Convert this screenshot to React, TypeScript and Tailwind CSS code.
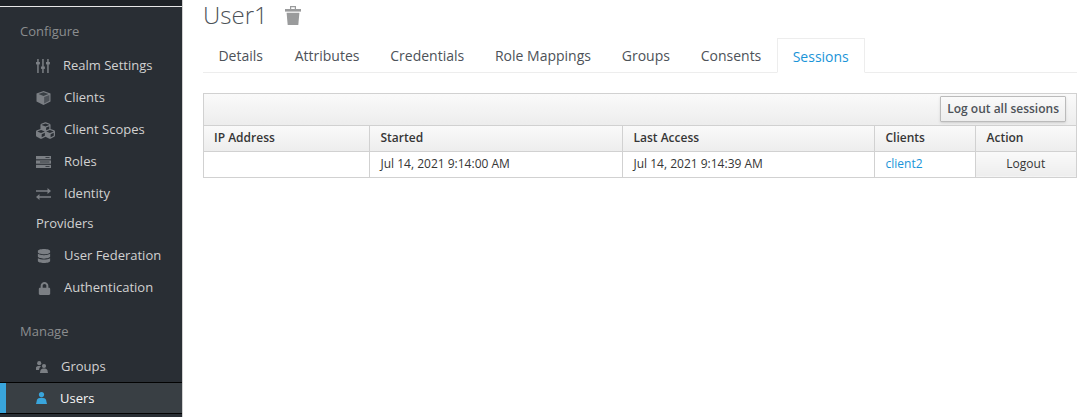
import type { ReactNode } from "react";
import { FaCubes, FaDatabase, FaLock } from "react-icons/fa";

function SlidersIcon() {
  return (
    <svg viewBox="0 0 14 14" className="h-[14px] w-[14px]" fill="currentColor">
      <rect x="1.2" y="0" width="1.5" height="14" />
      <rect x="6.2" y="0" width="1.5" height="14" />
      <rect x="11.2" y="0" width="1.5" height="14" />
      <rect x="0" y="3" width="3.9" height="2.4" />
      <rect x="5" y="7.5" width="3.9" height="2.4" />
      <rect x="10" y="3" width="3.9" height="2.4" />
    </svg>
  );
}

function CubeIcon() {
  return (
    <svg viewBox="0 0 15 15" className="h-[14px] w-[15px]">
      <path d="M7.5 0 15 2.8v8.4L7.5 15 0 11.2V2.8z" fill="#7b7f84" />
      <path d="M7.5 1.3 12.8 3.3 7.5 5.4 2.2 3.3z" fill="#393f44" />
      <path d="M8.2 6.5 13.8 4.2v6.3l-5.6 2.9z" fill="#4d5258" />
    </svg>
  );
}

function RolesIcon() {
  return (
    <svg viewBox="0 0 15 12" className="h-[12px] w-[15px]" fill="currentColor">
      <rect x="0" y="0" width="15" height="3.3" />
      <rect x="0" y="4.4" width="15" height="3.3" />
      <rect x="0" y="8.8" width="15" height="3.2" />
      <rect x="9.5" y="1.2" width="4" height="0.8" fill="#292e34" />
      <rect x="4" y="5.6" width="9.5" height="0.8" fill="#292e34" />
      <rect x="9.5" y="10" width="4" height="0.8" fill="#292e34" />
    </svg>
  );
}

function ExchangeIcon() {
  return (
    <svg viewBox="0 0 15 12" className="h-[12px] w-[15px]" fill="currentColor">
      <path d="M0 2.2h11.5V0L15 3l-3.5 3V3.8H0z" />
      <path d="M15 8.2H3.5V6L0 9l3.5 3V9.8H15z" />
    </svg>
  );
}

function GroupsIcon() {
  return (
    <svg viewBox="0 0 12 12" className="h-[12px] w-[12px]" fill="currentColor">
      <circle cx="3.2" cy="2.2" r="2.1" />
      <path d="M0 9V6.6c0-1 1.3-1.6 3.2-1.6.7 0 1.3.1 1.8.3C3.9 6.1 3.2 7.3 3 9z" />
      <circle cx="8" cy="5" r="2.1" />
      <path d="M3.9 12 4.6 9.2C4.9 8.2 6.2 7.6 8 7.6s3.1.6 3.4 1.6L12 12z" />
    </svg>
  );
}

function UserIcon() {
  return (
    <svg viewBox="0 0 11 12" className="h-[12px] w-[11px]" fill="currentColor">
      <circle cx="5.5" cy="2.6" r="2.6" />
      <path d="M0 12 1 7.8C1.3 6.6 3 5.8 5.5 5.8s4.2.8 4.5 2L11 12z" />
    </svg>
  );
}

function TrashIcon() {
  return (
    <svg viewBox="0 0 16 19" className="ml-[17px] h-[19px] w-4 text-[#9a9b9c]" fill="currentColor">
      <path d="M5 0h6v3H9.8V1.2H6.2V3H5z" />
      <rect x="0" y="3" width="16" height="2.6" />
      <path d="M1.6 6.8h12.8L13.3 19H2.7z" />
    </svg>
  );
}

function NavItem({
  icon,
  label,
  textLeft,
}: {
  icon: ReactNode;
  label: string;
  textLeft: string;
}) {
  return (
    <div className="flex h-8 items-center pl-9 text-[#d1d1d1]">
      <span className="flex w-4 justify-start text-[#7b7f84]">{icon}</span>
      <span className={textLeft}>{label}</span>
    </div>
  );
}

const tabs = ["Details", "Attributes", "Credentials", "Role Mappings", "Groups", "Consents"];

export default function App() {
  return (
    <div
      className="flex h-[417px] w-[1081px] overflow-hidden bg-white text-[13px] text-[#363636]"
      style={{ fontFamily: '"Open Sans", sans-serif' }}
    >
      <aside className="w-[183px] shrink-0 border-r border-[#d1d1d1] bg-[#292e34]">
        <div className="h-[7px] border-b border-[#e6e6e6] bg-[#1d2126]" />
        <div className="pt-[15px] pl-5 leading-[18px] text-[#8b8d8f]">Configure</div>
        <div className="mt-[10px]">
          <NavItem icon={<SlidersIcon />} label="Realm Settings" textLeft="ml-[11px]" />
          <NavItem icon={<CubeIcon />} label="Clients" textLeft="ml-3" />
          <NavItem icon={<FaCubes size={19} className="shrink-0" />} label="Client Scopes" textLeft="ml-3" />
          <NavItem icon={<RolesIcon />} label="Roles" textLeft="ml-3" />
          <NavItem icon={<ExchangeIcon />} label="Identity" textLeft="ml-3" />
          <div className="mb-[2px] flex h-7 items-center pl-9 text-[#d1d1d1]">Providers</div>
          <NavItem icon={<FaDatabase size={14} className="ml-px" />} label="User Federation" textLeft="ml-3" />
          <NavItem icon={<FaLock size={13} className="ml-[2px]" />} label="Authentication" textLeft="ml-3" />
        </div>
        <div className="mt-[18px] pl-5 leading-[18px] text-[#8b8d8f]">Manage</div>
        <div className="mt-[11px]">
          <NavItem icon={<GroupsIcon />} label="Groups" textLeft="ml-[9px]" />
        </div>
        <div className="-mt-px flex h-[32px] items-center border-y border-[#030303] bg-[#393f44] text-[#f5f5f5]">
          <div className="h-full w-[6px] bg-[#39a5dc]" />
          <span className="ml-[30px] flex w-4 justify-start text-[#39a5dc]">
            <UserIcon />
          </span>
          <span className="mt-[2px] ml-2">Users</span>
        </div>
      </aside>

      <main className="min-w-0 flex-1 pr-1 pl-5">
        <div className="flex h-[30px] items-center text-[#4d5258]">
          <h1 className="text-2xl leading-[30px] font-light">User1</h1>
          <TrashIcon />
        </div>

        <div className="mt-2 flex h-[35px] border-b border-[#ededed] text-sm text-[#4d5258]">
          {tabs.map((tab) => (
            <div key={tab} className="flex items-center px-[15.4px] pt-[2px] first:pr-[16.4px]">
              {tab}
            </div>
          ))}
          <div className="-mb-px flex items-center border border-[#ededed] border-b-white px-[15px] pt-[2px] text-[#1a94d8]">
            Sessions
          </div>
        </div>

        <div className="mt-5 border border-[#d1d1d1] text-xs">
          <div className="flex h-[32px] items-start justify-end border-b border-[#d1d1d1] bg-gradient-to-b from-[#fafafa] to-[#ededed] pt-[2px] pr-[10px]">
            <button className="h-[26px] rounded-[1px] border border-[#bbb] bg-gradient-to-b from-[#fafafa] to-[#ededed] px-[6px] font-semibold text-[#4d5258] shadow-sm">
              Log out all sessions
            </button>
          </div>
          <table className="w-full table-fixed border-collapse">
            <colgroup>
              <col className="w-[165px]" />
              <col className="w-[253px]" />
              <col className="w-[252px]" />
              <col className="w-[101px]" />
              <col />
            </colgroup>
            <thead>
              <tr className="h-[25px] bg-gradient-to-b from-[#fafafa] to-[#ededed] text-left font-semibold">
                <th className="px-[10px] font-semibold">IP Address</th>
                <th className="border-l border-[#d1d1d1] px-[11px] font-semibold">Started</th>
                <th className="border-l border-[#d1d1d1] px-[11px] font-semibold">Last Access</th>
                <th className="border-l border-[#d1d1d1] px-[11px] font-semibold">Clients</th>
                <th className="border-l border-[#d1d1d1] px-[11px] font-semibold">Action</th>
              </tr>
            </thead>
            <tbody>
              <tr className="h-[26px] border-t border-[#d1d1d1]">
                <td className="px-[10px]" />
                <td className="border-l border-[#d1d1d1] px-[11px]">Jul 14, 2021 9:14:00 AM</td>
                <td className="border-l border-[#d1d1d1] px-[11px]">Jul 14, 2021 9:14:39 AM</td>
                <td className="border-l border-[#d1d1d1] px-[11px] text-[#1a94d8]">client2</td>
                <td className="border-l border-[#d1d1d1] bg-gradient-to-b from-[#fafafa] to-[#ededed] text-center">
                  Logout
                </td>
              </tr>
            </tbody>
          </table>
        </div>
      </main>
    </div>
  );
}
